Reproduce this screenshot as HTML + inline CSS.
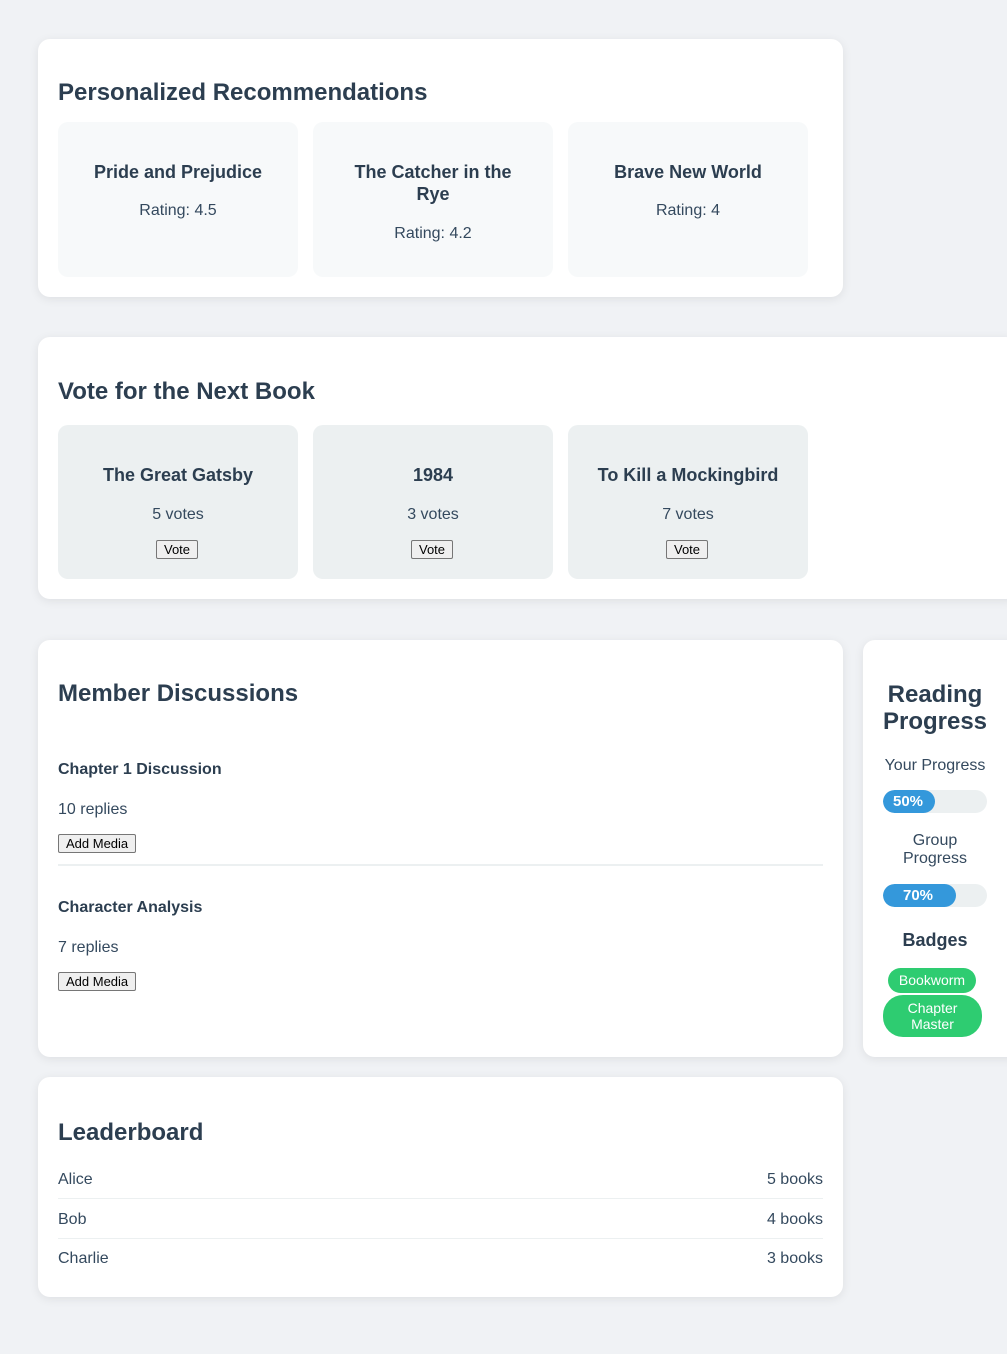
<!DOCTYPE html>
<html><head><meta charset="utf-8"><style>
*{margin:0;padding:0;box-sizing:border-box}
body{width:1007px;height:1354px;background:#f0f2f5;font-family:"Liberation Sans",Arial,sans-serif;color:#2c3e50;position:relative;overflow:hidden}
.card{position:absolute;background:#fff;border-radius:12px;box-shadow:0 2px 10px rgba(0,0,0,0.08)}
.a{position:absolute;white-space:nowrap}
h2{position:absolute;font-size:24px;font-weight:bold;line-height:30px;color:#2c3e50}
.item{position:absolute;width:240px;height:155px;border-radius:10px;background:#f7f9fa}
.vi{background:#ecf0f1;height:154px}
.ct{position:absolute;left:0;width:240px;text-align:center}
.tt{font-size:18px;font-weight:bold;line-height:22px}
.sub{font-size:16px;line-height:20px;color:#34495e}
.btn{position:absolute;font-size:13px;line-height:17px;color:#000;background:#efefef;border:1px solid #767676;border-radius:2px;padding:0 7px}
.hr{position:absolute;height:1px;background:#ecf0f1}
.bar{position:absolute;left:883px;width:104px;height:23px;border-radius:12px;background:#ecf0f1;overflow:hidden}
.fill{height:23px;border-radius:12px;background:#3498db;color:#fff;font-weight:bold;font-size:15px;line-height:23px;padding-left:10px}
.pill{position:absolute;background:#2ecc71;color:#fff;font-size:14px;text-align:center;border-radius:20px}
</style></head><body>

<div class="card" style="left:38px;top:39px;width:805px;height:258px"></div>
<h2 style="left:58px;top:78px">Personalized Recommendations</h2>
<div class="item" style="left:58px;top:122px"><div class="ct tt" style="top:39px">Pride and Prejudice</div><div class="ct sub" style="top:79px">Rating: 4.5</div></div>
<div class="item" style="left:313px;top:122px"><div class="ct tt" style="top:39px;white-space:normal;padding:0 30px">The Catcher in the Rye</div><div class="ct sub" style="top:102px">Rating: 4.2</div></div>
<div class="item" style="left:568px;top:122px"><div class="ct tt" style="top:39px">Brave New World</div><div class="ct sub" style="top:79px">Rating: 4</div></div>

<div class="card" style="left:38px;top:337px;width:980px;height:262px"></div>
<h2 style="left:58px;top:377px">Vote for the Next Book</h2>
<div class="item vi" style="left:58px;top:425px"><div class="ct tt" style="top:39px">The Great Gatsby</div><div class="ct sub" style="top:80px">5 votes</div><div class="btn" style="left:98px;top:115px">Vote</div></div>
<div class="item vi" style="left:313px;top:425px"><div class="ct tt" style="top:39px">1984</div><div class="ct sub" style="top:80px">3 votes</div><div class="btn" style="left:98px;top:115px">Vote</div></div>
<div class="item vi" style="left:568px;top:425px"><div class="ct tt" style="top:39px">To Kill a Mockingbird</div><div class="ct sub" style="top:80px">7 votes</div><div class="btn" style="left:98px;top:115px">Vote</div></div>

<div class="card" style="left:38px;top:640px;width:805px;height:417px"></div>
<h2 style="left:58px;top:679px">Member Discussions</h2>
<div class="a" style="left:58px;top:760px;font-size:16px;font-weight:bold;line-height:20px">Chapter 1 Discussion</div>
<div class="a sub" style="left:58px;top:800px">10 replies</div>
<div class="btn" style="left:58px;top:834px">Add Media</div>
<div class="hr" style="left:58px;top:864px;width:765px;height:2px"></div>
<div class="a" style="left:58px;top:898px;font-size:16px;font-weight:bold;line-height:20px">Character Analysis</div>
<div class="a sub" style="left:58px;top:938px">7 replies</div>
<div class="btn" style="left:58px;top:972px">Add Media</div>

<div class="card" style="left:863px;top:640px;width:160px;height:417px"></div>
<div class="a" style="left:863px;width:144px;top:681px;text-align:center;font-size:24px;font-weight:bold;line-height:27px;white-space:normal">Reading Progress</div>
<div class="a sub" style="left:863px;width:144px;top:756px;text-align:center">Your Progress</div>
<div class="bar" style="top:790px"><div class="fill" style="width:52px">50%</div></div>
<div class="a sub" style="left:863px;width:144px;top:832px;text-align:center;white-space:normal;line-height:18px;padding:0 30px">Group Progress</div>
<div class="bar" style="top:884px"><div class="fill" style="width:73px;padding-left:20px">70%</div></div>
<div class="a" style="left:863px;width:144px;top:929px;text-align:center;font-size:18px;font-weight:bold;line-height:22px">Badges</div>
<div class="pill" style="left:888px;top:968px;width:88px;height:25px;line-height:25px">Bookworm</div>
<div class="pill" style="left:883px;top:995px;width:99px;height:42px;line-height:16px;padding-top:5px">Chapter<br>Master</div>

<div class="card" style="left:38px;top:1077px;width:805px;height:220px"></div>
<h2 style="left:58px;top:1118px">Leaderboard</h2>
<div class="a sub" style="left:58px;top:1170px">Alice</div><div class="a sub" style="right:184px;top:1170px">5 books</div>
<div class="hr" style="left:58px;top:1198px;width:765px"></div>
<div class="a sub" style="left:58px;top:1210px">Bob</div><div class="a sub" style="right:184px;top:1210px">4 books</div>
<div class="hr" style="left:58px;top:1238px;width:765px"></div>
<div class="a sub" style="left:58px;top:1249px">Charlie</div><div class="a sub" style="right:184px;top:1249px">3 books</div>

</body></html>
